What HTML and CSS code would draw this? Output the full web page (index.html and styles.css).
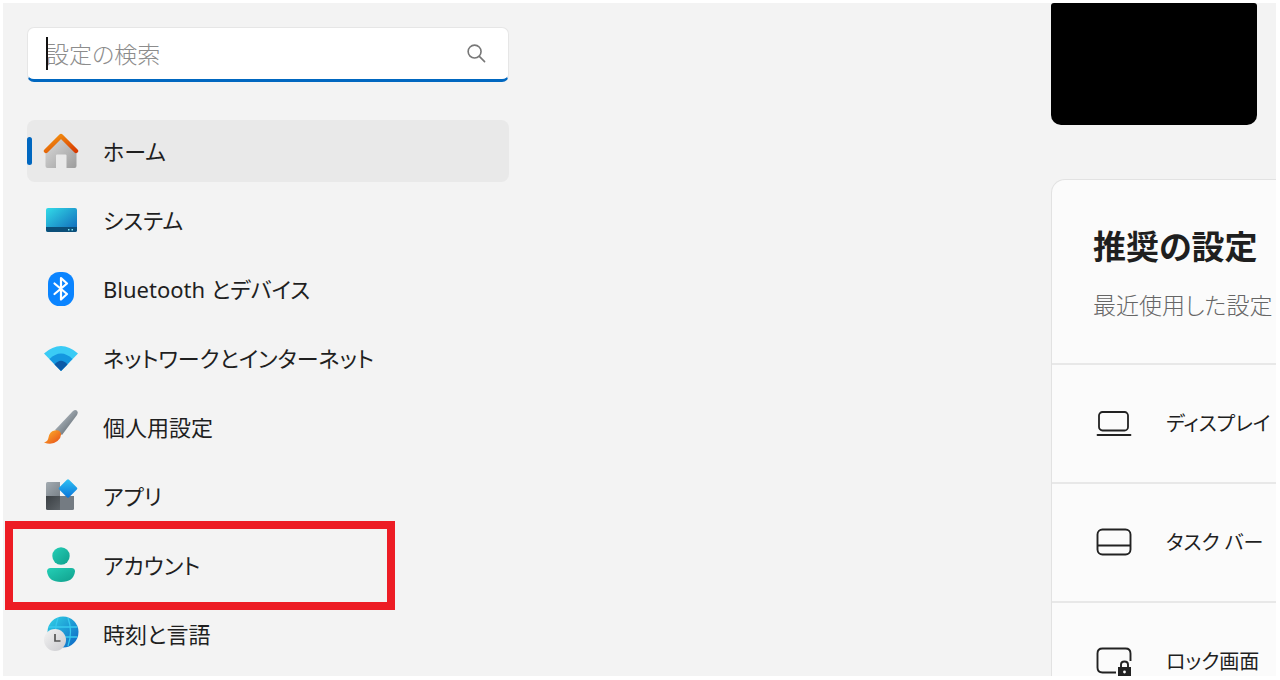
FILE: index.html
```html
<!DOCTYPE html>
<html lang="ja">
<head>
<meta charset="utf-8">
<meta name="viewport" content="width=device-width, initial-scale=1">
<title>設定</title>
<link rel="stylesheet" href="styles.css">
</head>
<body>
<div class="window">
  <aside class="sidebar">
    <form class="search" role="search">
      <span class="caret"></span>
      <input class="search-input" type="text" placeholder="設定の検索" aria-label="設定の検索">
      <button class="search-button" type="button" aria-label="検索">
        <svg width="19" height="19" viewBox="0 0 20 20" fill="none" stroke="#777" stroke-width="1.700" stroke-linecap="round"><circle cx="8" cy="8" r="6.800"/><path d="M13 13l5.500 5.500"/></svg>
      </button>
    </form>
    <nav>
      <ul class="nav-list">
        <li class="nav-item"><a class="nav-link current" href="#home" aria-current="page">
          <svg class="nav-icon" viewBox="0 0 36 36">
            <defs>
              <linearGradient id="wall" x1="0" y1="0" x2="1" y2="1"><stop offset="0" stop-color="#ddd"/><stop offset="1" stop-color="#9c9c9c"/></linearGradient>
              <linearGradient id="roof" x1="0" y1="0" x2="1" y2="1"><stop offset="0" stop-color="#f59a12"/><stop offset="1" stop-color="#d83b01"/></linearGradient>
            </defs>
            <path fill="url(#wall)" d="M18 4L33.500 18v15q0 2-2 2H23.500V22.500q0-1-1-1H14q-1 0-1 1V35H4.500q-2 0-2-2V18z"/>
            <path fill="none" stroke="url(#roof)" stroke-width="4.400" stroke-linecap="round" stroke-linejoin="round" d="M3 18L18 3l15 15"/>
          </svg>ホーム</a></li>
        <li class="nav-item"><a class="nav-link" href="#system">
          <svg class="nav-icon" viewBox="0 0 36 36">
            <defs><linearGradient id="screen" x1="0" y1="0" x2="1" y2="1"><stop offset="0" stop-color="#32dbe8"/><stop offset="1" stop-color="#0f64b8"/></linearGradient></defs>
            <rect x="3" y="6" width="31" height="24" rx="2" fill="url(#screen)"/>
            <path d="M3 25h31v3q0 2-2 2H5q-2 0-2-2z" fill="#0b4f79"/>
            <path d="M25 27h1.500v1.500H25zM28.500 27H30v1.500h-1.500z" fill="#7fe6f5"/>
          </svg>システム</a></li>
        <li class="nav-item"><a class="nav-link" href="#bluetooth">
          <svg class="nav-icon" viewBox="0 0 36 36">
            <rect x="5" y="1" width="26" height="34" rx="11.500" fill="#0a84ff"/>
            <path d="M11.500 12.500L24 23l-6 5.500V7l6 5.500-12.500 10.500" fill="none" stroke="#fff" stroke-width="2.200" stroke-linejoin="round" stroke-linecap="round"/>
          </svg>Bluetooth とデバイス</a></li>
        <li class="nav-item"><a class="nav-link" href="#network">
          <svg class="nav-icon" viewBox="0 0 36 36">
            <path fill="#3acbf5" d="M1 13.500Q18-1.500 35 13.500L18 31z"/>
            <path fill="#1497e0" d="M6.500 19Q18 8 29.500 19L18 31z"/>
            <path fill="#0b5aa8" d="M11.500 24.500Q18 17 24.500 24.500L18 31z"/>
          </svg>ネットワークとインターネット</a></li>
        <li class="nav-item"><a class="nav-link" href="#personalization">
          <svg class="nav-icon" viewBox="0 0 36 36">
            <defs>
              <linearGradient id="handle" x1="0" y1="0" x2="1" y2="1"><stop offset="0.300" stop-color="#a7b0b7"/><stop offset="0.800" stop-color="#646d75"/></linearGradient>
              <linearGradient id="bristle" x1="0" y1="0" x2="1" y2="1"><stop offset="0" stop-color="#ffba2c"/><stop offset="1" stop-color="#e64a18"/></linearGradient>
            </defs>
            <path fill="url(#handle)" d="M12 21L30 2q2.500-1.800 4.200 0 1.300 1.700-.2 4L19 26z"/>
            <path fill="url(#bristle)" d="M11.500 21.500q5-1.500 6.500 3 .5 4-3.500 7.500-5.500 4.500-13.500 1.500 4-1 4.500-5 1-6 6-7z"/>
          </svg>個人用設定</a></li>
        <li class="nav-item"><a class="nav-link" href="#apps">
          <svg class="nav-icon" viewBox="0 0 36 36">
            <defs>
              <linearGradient id="tile" x1="0" y1="0" x2="1" y2="1"><stop offset="0" stop-color="#a3abb1"/><stop offset="1" stop-color="#7b838a"/></linearGradient>
              <linearGradient id="dark" x1="0" y1="0" x2="1" y2="1"><stop offset="0" stop-color="#3b4044"/><stop offset="1" stop-color="#5d6368"/></linearGradient>
              <linearGradient id="diamond" x1="0" y1="0" x2="1" y2="1"><stop offset="0" stop-color="#31c4f5"/><stop offset="1" stop-color="#0872d8"/></linearGradient>
            </defs>
            <path fill="url(#tile)" d="M4.500 4H17v14H3V5.500Q3 4 4.500 4z"/>
            <path fill="url(#dark)" d="M3 18h14v14H4.500Q3 32 3 30.500z"/>
            <path fill="#747b82" d="M17 18h14v12.500q0 1.500-1.500 1.500H17z"/>
            <rect x="18" y="3.500" width="14" height="14" rx="1.500" transform="rotate(45 25 10.500)" fill="url(#diamond)"/>
          </svg>アプリ</a></li>
        <li class="nav-item highlighted"><a class="nav-link" href="#accounts">
          <svg class="nav-icon" viewBox="0 0 36 36">
            <defs><linearGradient id="person" x1="0" y1="0" x2="1" y2="1"><stop offset="0" stop-color="#24cfb6"/><stop offset="1" stop-color="#109f8c"/></linearGradient></defs>
            <circle cx="18" cy="9" r="8.700" fill="url(#person)"/>
            <path d="M7.500 21h21q3.500 0 3.500 3.500Q30.500 35 18 35T4 24.500Q4 21 7.500 21z" fill="url(#person)"/>
          </svg>アカウント</a></li>
        <li class="nav-item"><a class="nav-link" href="#time">
          <svg class="nav-icon" viewBox="0 0 36 36">
            <defs>
              <linearGradient id="globe" x1="0" y1="0" x2="1" y2="1"><stop offset="0" stop-color="#31d4e6"/><stop offset="1" stop-color="#0b62c4"/></linearGradient>
              <linearGradient id="clock" x1="0" y1="0" x2="1" y2="1"><stop offset="0" stop-color="#f4f4f4"/><stop offset="1" stop-color="#c9c9cd"/></linearGradient>
            </defs>
            <circle cx="20" cy="16" r="15.500" fill="url(#globe)"/>
            <path d="M6 11h28M6 21h28M15 2q-5 13 0 28M25 2q5 13 0 28" fill="none" stroke="#37c9ee" stroke-width="1.300"/>
            <circle cx="12" cy="24" r="11" fill="url(#clock)"/>
            <path d="M12 18v7h5.500" fill="none" stroke="#555" stroke-width="1.700"/>
          </svg>時刻と言語</a></li>
      </ul>
    </nav>
  </aside>
  <main class="content">
    <div class="preview"></div>
    <section class="card">
      <header class="card-header">
        <h2 class="card-title">推奨の設定</h2>
        <p class="card-text">最近使用した設定と</p>
      </header>
      <a class="card-row" href="#display">
        <svg class="row-icon" viewBox="0 0 36 36" fill="none" stroke="#222" stroke-width="1.800" stroke-linecap="round"><rect x="3" y="6" width="29" height="18.500" rx="3.500"/><path d="M1.500 29h33"/></svg>
        ディスプレイ</a>
      <a class="card-row" href="#taskbar">
        <svg class="row-icon" viewBox="0 0 36 36" fill="none" stroke="#222" stroke-width="1.900"><rect x="1.500" y="4.500" width="33" height="25" rx="5"/><path d="M1.500 20.500h33"/></svg>
        タスク バー</a>
      <a class="card-row" href="#lock">
        <svg class="row-icon" viewBox="0 0 36 36" fill="none" stroke="#222" stroke-width="1.900"><path d="M20 28.500H6.500q-5 0-5-5V9.500q0-5 5-5h23q5 0 5 5V17"/><path d="M25 24v-3.500q0-3 3.500-3t3.500 3V24"/><path d="M22 23h13v11H22z" fill="#222" stroke="none"/><circle cx="28.500" cy="28" r="1.400" fill="#fff" stroke="none"/></svg>
        ロック画面</a>
    </section>
  </main>
</div>
</body>
</html>
```
FILE: styles.css
```css
*,
*::before,
*::after {
  box-sizing: border-box;
}

body {
  margin: 0;
  height: 100vh;
  padding: 3px 4px 4px 3px;
  overflow: hidden;
  background: #fff;
  color: #1f1f1f;
  font-family: "Noto Sans", "Noto Sans CJK JP", sans-serif;
  font-size: 22px;
  line-height: 32px;
  font-feature-settings: "palt";
}

.window {
  display: flex;
  justify-content: space-between;
  height: 100%;
  overflow: hidden;
  background: #f3f3f3;
}

.sidebar {
  flex: 0 0 506px;
  padding: 24px 0 0 24px;
}

.search {
  position: relative;
  display: flex;
  align-items: center;
  height: 55px;
  margin-bottom: 38px;
  padding: 0 22px 0 18px;
  border: 1px solid #e6e6e6;
  border-bottom: 3px solid #0067c0;
  border-radius: 7px;
  background: #fff;
}

.caret {
  position: absolute;
  left: 18px;
  top: 9px;
  width: 2px;
  height: 33px;
  background: #111;
}

.search-input {
  flex: 1;
  min-width: 0;
  padding: 0;
  border: 0;
  outline: 0;
  background: transparent;
  color: inherit;
  font: inherit;
  font-size: 23px;
  font-feature-settings: inherit;
}

.search-input::placeholder {
  color: #8c8c8c;
  font-weight: 300;
}

.search-button {
  display: flex;
  padding: 0;
  border: 0;
  background: none;
}

.nav-list {
  display: flex;
  flex-direction: column;
  gap: 7px;
  margin: 0;
  padding: 0;
  list-style: none;
}

.nav-item {
  position: relative;
}

.nav-link {
  position: relative;
  display: flex;
  align-items: center;
  gap: 24px;
  height: 62px;
  padding-left: 16px;
  border-radius: 8px;
  color: inherit;
  text-decoration: none;
  white-space: nowrap;
}

.nav-link.current {
  background: #e9e9e9;
}

.nav-link.current::before {
  content: "";
  position: absolute;
  left: 0;
  top: 17px;
  width: 5px;
  height: 28px;
  border-radius: 3px;
  background: #0067c0;
}

.nav-icon,
.row-icon {
  flex: none;
  width: 36px;
  height: 36px;
}

.highlighted::after {
  content: "";
  position: absolute;
  left: -22px;
  top: -13px;
  width: 390px;
  height: 89px;
  border: 8px solid #ed1c24;
  pointer-events: none;
}

.content {
  flex: 0 0 225px;
  min-width: 0;
}

.preview {
  width: 206px;
  height: 122px;
  margin-bottom: 54px;
  border-radius: 3px 3px 10px 10px;
  background: #000;
}

.card {
  overflow: hidden;
  border: 1px solid #e2e2e2;
  border-width: 1px 0 0 1px;
  border-radius: 14px 0 0 0;
  background: #fbfbfb;
  white-space: nowrap;
}

.card-header {
  height: 183px;
  padding: 45px 0 0 41px;
}

.card-title {
  margin: 0 0 20px;
  font-size: 33px;
  line-height: 44px;
  font-weight: 700;
}

.card-text {
  margin: 0;
  color: #666;
  font-size: 23px;
  font-weight: 300;
}

.card-row {
  display: flex;
  align-items: center;
  gap: 34px;
  height: 119px;
  padding-left: 44px;
  border-top: 2px solid #e8e8e8;
  color: inherit;
  font-size: 20px;
  text-decoration: none;
}
```
